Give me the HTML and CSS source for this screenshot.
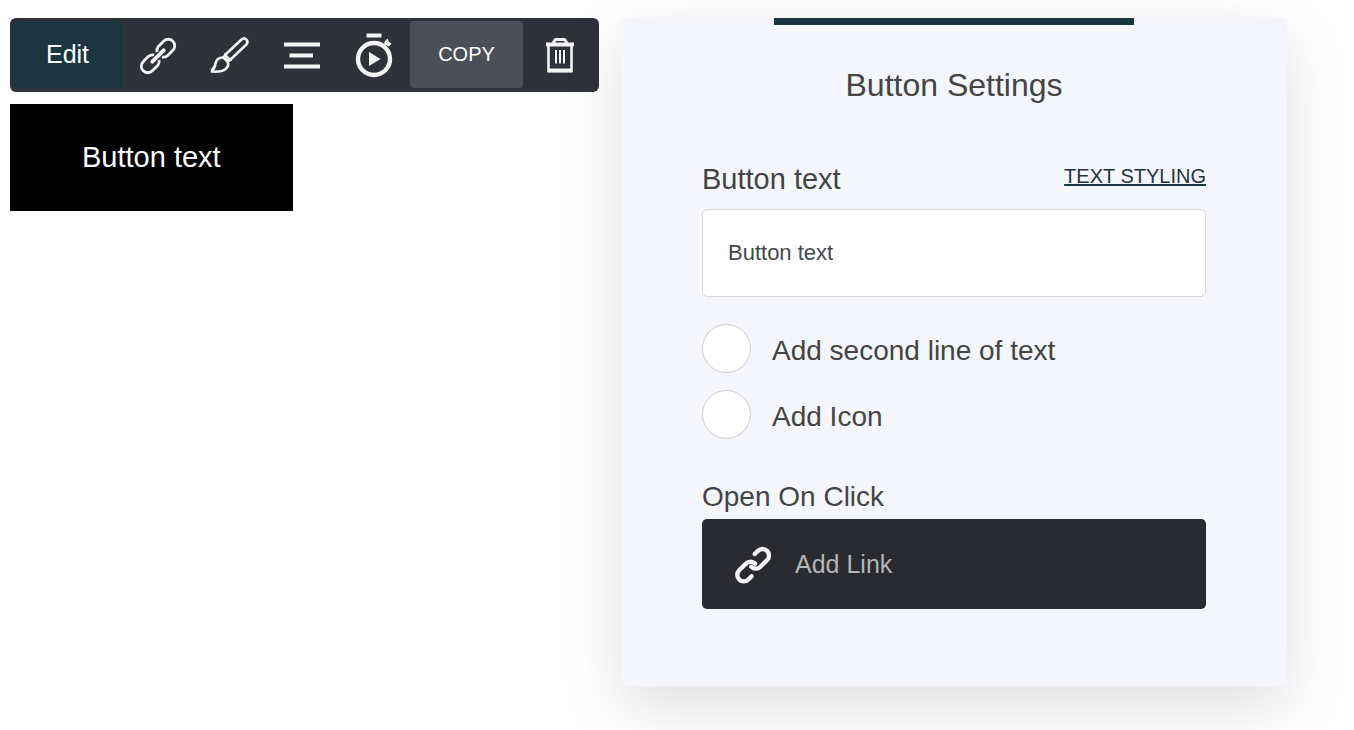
FILE: index.html
```html
<!DOCTYPE html>
<html lang="en">
<head>
    <meta charset="utf-8">
    <title>Button Settings</title>
    <link rel="stylesheet" href="styles.css">
</head>
<body>

    <main class="editor">
        <div class="canvas">
            <div class="toolbar" role="toolbar" aria-label="Button tools">
                <button type="button" class="tool tool-edit">Edit</button>
                <button type="button" class="tool" aria-label="Link">
                    <svg class="icon" viewBox="0 0 40 40">
                        <g transform="rotate(-45 20 21)" stroke-width="2.8">
                            <path d="M18 24.5a7 7 0 0 1-5 3H5.500a6.500 6.500 0 0 1 0-13H13a7 7 0 0 1 5 3"/>
                            <path d="M22 17.500a7 7 0 0 1 5-3h7.500a6.500 6.500 0 0 1 0 13H27a7 7 0 0 1-5-3"/>
                            <path d="M12 21h16" stroke-width="4" stroke-linecap="round"/>
                        </g>
                    </svg>
                </button>
                <button type="button" class="tool" aria-label="Style">
                    <svg class="icon" viewBox="0 0 40 40">
                        <g stroke-width="2.6">
                            <path d="M15 20L31.500 4.500c2.500-2.500 8 0 5 5L20 25"/>
                            <path d="M15 20l5 5-2.500 1.500-4-4z"/>
                            <path d="M13.500 22.500c-4.500-.5-7.500 2.500-8 6-.3 3-1.500 5-3.500 6.500v1.500c5 .3 10 .3 13-2 3-2.300 4-5 2.500-8"/>
                        </g>
                    </svg>
                </button>
                <button type="button" class="tool" aria-label="Align">
                    <svg class="icon" viewBox="0 0 40 40">
                        <path d="M2 9.500h36M7.500 20.500h23.500M2 31.500h36" stroke-width="4"/>
                    </svg>
                </button>
                <button type="button" class="tool" aria-label="Timer">
                    <svg class="icon icon-timer" viewBox="0 0 40 44">
                        <circle cx="20" cy="26" r="16" stroke-width="4.400"/>
                        <path d="M12.500 2.500h15" stroke-width="4"/>
                        <path class="solid" d="M15 19l11.500 7L15 33zM30 11l1-3 2.500-2.500L35 9l2.500 1.500-2.500 3z"/>
                    </svg>
                </button>
                <button type="button" class="tool tool-copy">COPY</button>
                <button type="button" class="tool tool-delete" aria-label="Delete">
                    <svg class="icon" viewBox="0 0 40 40">
                        <path d="M8.500 10.500V36h23V10.500" stroke-width="2.600"/>
                        <path d="M6 9.500h28M8 35.500h24" stroke-width="4"/>
                        <path d="M13 8l2.500-3.500h9L27 8" stroke-width="3"/>
                        <path d="M16 15v13.500M20 15v13.500M24 15v13.500" stroke-width="2"/>
                    </svg>
                </button>
            </div>
            <button type="button" class="preview">Button text</button>
        </div>

        <section class="panel">
            <h1 class="panel-title">Button Settings</h1>

            <div class="field-head">
                <label class="field-label" for="button-text">Button text</label>
                <a class="text-styling" href="#">TEXT STYLING</a>
            </div>
            <input class="text-input" type="text" id="button-text" value="Button text">

            <div class="options">
                <div class="option">
                    <input type="checkbox" id="second-line">
                    <label for="second-line">Add second line of text</label>
                </div>
                <div class="option">
                    <input type="checkbox" id="add-icon">
                    <label for="add-icon">Add Icon</label>
                </div>
            </div>

            <h2 class="click-title">Open On Click</h2>
            <button type="button" class="add-link">
                <svg class="icon" viewBox="0 0 40 40">
                    <g transform="rotate(-45 20 21)" stroke-width="4.400" stroke-linecap="round">
                        <path d="M11 28H6.500a6.500 6.500 0 0 1 0-13H16a6.500 6.500 0 0 1 6.500 6.500"/>
                        <path d="M29 14.500h4.500a6.500 6.500 0 0 1 0 13H24a6.500 6.500 0 0 1-6.500-6.500"/>
                    </g>
                </svg>
                <span>Add Link</span>
            </button>
        </section>
    </main>

</body>
</html>
```
FILE: styles.css
```css
* {
    box-sizing: border-box;
}

body {
    margin: 0;
    background: #fff;
    font-family: "Liberation Sans", Arial, sans-serif;
    color: #444;
}

button,
input {
    font-family: inherit;
}

button {
    cursor: pointer;
}

.editor {
    display: flex;
    align-items: flex-start;
    gap: 22px;
    padding: 18px 67px 44px 10px;
}

/* toolbar */
.toolbar {
    display: flex;
    height: 74px;
    padding: 3px 3px 4px;
    border-radius: 6px;
    background: #30323a;
}

.tool {
    display: flex;
    align-items: center;
    justify-content: center;
    width: 72px;
    padding: 0;
    border: 0;
    border-radius: 4px;
    background: none;
    color: #fff;
}

.tool-edit {
    width: 109px;
    background: #1b3541;
    font-size: 25px;
}

.tool-copy {
    width: 113px;
    background: #4d4f58;
    font-size: 20px;
}

.tool-delete {
    width: 73px;
}

.icon {
    width: 40px;
    height: 40px;
    fill: none;
    stroke: #f4f4f4;
    overflow: visible;
}

.icon-timer {
    height: 44px;
}

.solid {
    fill: #f4f4f4;
    stroke: none;
}

.preview {
    display: block;
    margin-top: 12px;
    padding: 36px 72px;
    border: 0;
    background: #000;
    color: #fff;
    font-size: 29px;
    line-height: 35px;
}

/* settings panel */
.panel {
    position: relative;
    flex: 1;
    padding: 48px 81px 77px;
    background: #f4f6fb;
    box-shadow: 0 20px 60px rgba(0, 0, 0, 0.13);
}

.panel::before {
    content: "";
    position: absolute;
    top: 0;
    left: 23%;
    right: 23%;
    height: 7px;
    background: #1b3541;
}

.panel-title {
    margin: 0 0 57px;
    font-size: 32px;
    font-weight: normal;
    line-height: 38px;
    text-align: center;
}

.field-head {
    display: flex;
    justify-content: space-between;
    align-items: flex-start;
    height: 48px;
}

.field-label {
    font-size: 29px;
    line-height: 36px;
}

.text-styling {
    color: #1b3541;
    font-size: 20px;
    line-height: 30px;
}

.text-input {
    display: block;
    width: 100%;
    height: 88px;
    padding: 0 25px;
    border: 1px solid #d8d8d8;
    border-radius: 5px;
    background: #fff;
    color: #45474f;
    font-size: 22px;
}

.options {
    display: grid;
    gap: 17px;
    margin: 27px 0 40px;
}

.option {
    display: flex;
    align-items: center;
    gap: 21px;
    font-size: 28px;
    line-height: 32px;
}

.option label {
    padding-top: 4px;
}

.option input {
    appearance: none;
    width: 49px;
    height: 49px;
    margin: 0;
    border: 1px solid #ccc;
    border-radius: 50%;
    background: #fff;
}

.option input:checked {
    background: #1b3541;
}

.click-title {
    margin: 0 0 4px;
    font-size: 28px;
    font-weight: normal;
    line-height: 36px;
}

.add-link {
    display: flex;
    align-items: center;
    gap: 22px;
    width: 100%;
    height: 90px;
    padding: 0 31px;
    border: 0;
    border-radius: 5px;
    background: #2a2b30;
    color: #b5b5b5;
    font-size: 25px;
}
```
